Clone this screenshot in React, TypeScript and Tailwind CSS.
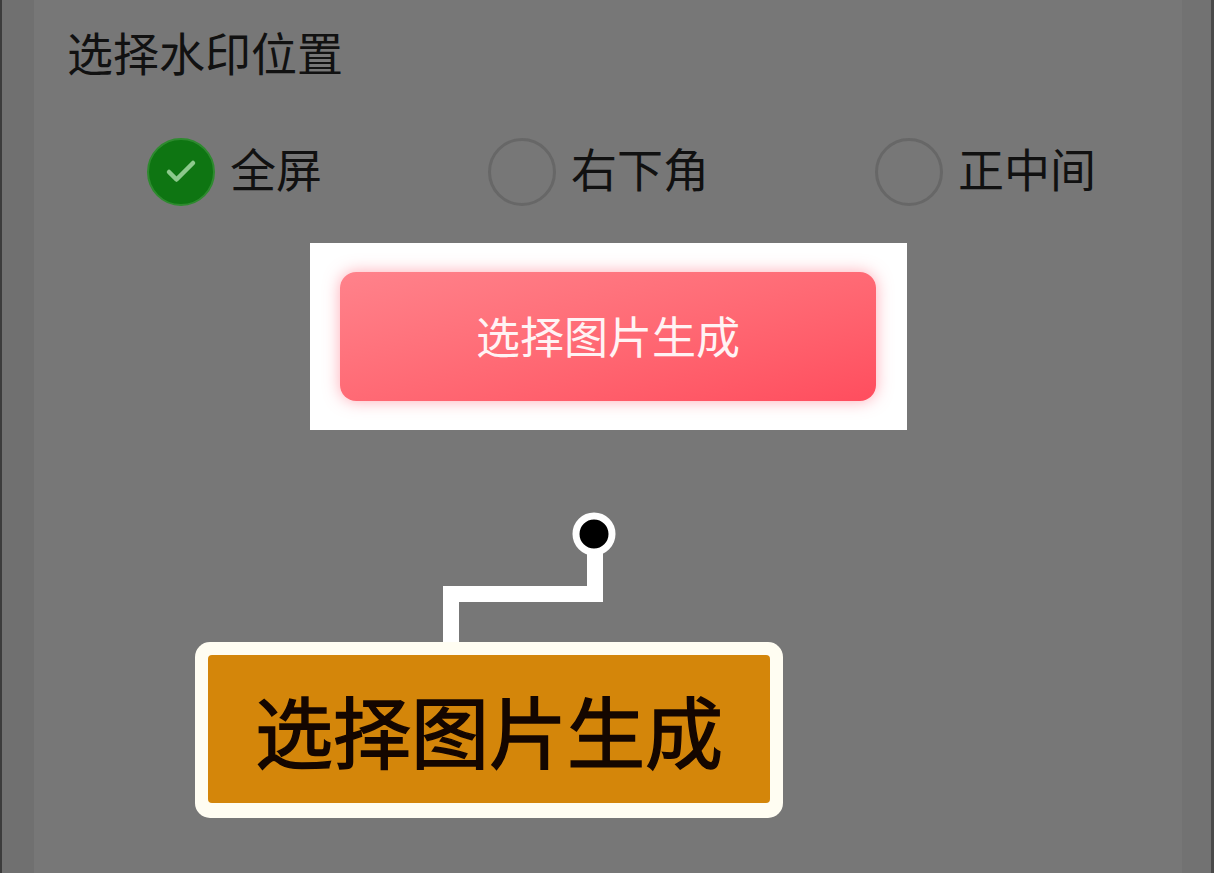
import { Check } from 'lucide-react';

const cjk = { fontFamily: '"Noto Sans CJK SC", "Noto Sans", sans-serif' };

const options = [
  { label: '全屏', checked: true },
  { label: '右下角', checked: false },
  { label: '正中间', checked: false },
];

function Radio({ label, checked }: { label: string; checked: boolean }) {
  return (
    <div className="flex items-center gap-[15px]">
      {checked ? (
        <div className="w-[68px] h-[68px] rounded-full bg-[#0e7512] border-2 border-[#2e8a2f] flex items-center justify-center">
          <Check size={36} strokeWidth={3} className="text-[#8cc98c]" />
        </div>
      ) : (
        <div className="w-[68px] h-[68px] rounded-full border-[3px] border-[#676767]" />
      )}
      <span className="text-[46px] leading-none text-[#111] pb-[10px]">{label}</span>
    </div>
  );
}

export default function App() {
  return (
    <div className="w-full h-[873px] flex bg-[#777777] overflow-hidden" style={cjk}>
      {/* left edge */}
      <div className="w-[34px] h-full bg-[#707070] border-l-[2px] border-[#3c3c3c]" />

      {/* main panel */}
      <div className="relative flex-1 h-full flex flex-col items-start bg-[#777777]">
        <h1 className="mt-[28px] ml-[33px] text-[46px] leading-none font-normal text-[#111]">
          选择水印位置
        </h1>

        <div className="mt-[64px] ml-[113px] flex items-center gap-[166px]">
          {options.map((o) => (
            <Radio key={o.label} label={o.label} checked={o.checked} />
          ))}
        </div>

        {/* highlighted button */}
        <div className="mt-[37px] ml-[276px] w-[597px] h-[187px] bg-white pt-[29px] pl-[30px]">
          <button className="w-[536px] h-[129px] rounded-[16px] bg-linear-to-br from-[#ff828b] to-[#ff4d5e] shadow-[0_0_16px_rgba(255,90,110,0.5)] flex items-center justify-center">
            <span className="text-[44px] leading-none text-[#fff3f4] pb-[4px]">选择图片生成</span>
          </button>
        </div>

        {/* callout connector */}
        <svg
          className="absolute left-[400px] top-[500px]"
          width="240"
          height="150"
          viewBox="0 0 240 150"
        >
          <path d="M161 40 V94 H17 V150" fill="none" stroke="#fff" strokeWidth="16" strokeLinejoin="miter" />
          <circle cx="160" cy="34" r="18" fill="#000" stroke="#fff" strokeWidth="7" />
        </svg>

        {/* callout label */}
        <div className="relative mt-[212px] ml-[161px] w-[588px] h-[176px] rounded-[15px] bg-[#fffdf2] p-[13px] pb-[15px]">
          <div className="w-full h-full rounded-[4px] bg-[#d4860a] flex items-center justify-center">
            <span className="text-[78px] leading-none font-normal text-[#140600] [-webkit-text-stroke:1.5px_#140600]">
              选择图片生成
            </span>
          </div>
        </div>
      </div>

      {/* right edge */}
      <div className="w-[32px] h-full bg-[#727272] border-r-[3px] border-[#4a4a4a]" />
    </div>
  );
}
